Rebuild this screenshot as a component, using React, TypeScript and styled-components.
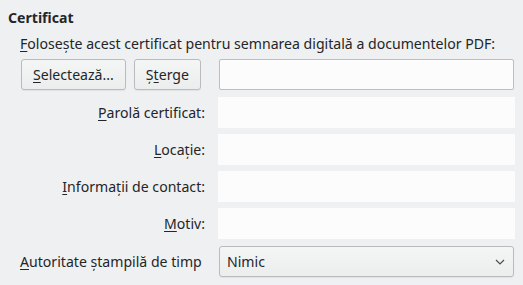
import styled, { createGlobalStyle } from 'styled-components';

const GlobalStyle = createGlobalStyle`
  html, body {
    margin: 0;
    padding: 0;
    background: #eff0f1;
  }
  body {
    font-family: 'Noto Sans', 'DejaVu Sans', sans-serif;
    font-size: 14.1px;
    color: #232629;
  }
`;

const Page = styled.div`
  width: 523px;
  height: 285px;
  box-sizing: border-box;
  padding: 8px 0 0 8px;
`;

const Title = styled.div`
  font-weight: bold;
  line-height: 19px;
`;

const Body = styled.div`
  padding: 0 8px 0 12px;
  margin-top: 7px;
`;

const Intro = styled.div`
  line-height: 19px;
  margin-bottom: 6px;
`;

const Form = styled.div`
  display: grid;
  grid-template-columns: 185px 297px;
  column-gap: 13px;
  row-gap: 6px;
  align-items: center;
`;

const ButtonPair = styled.div`
  display: flex;
  gap: 8px;
  padding-left: 1px;
  margin-bottom: 1px;
`;

const Button = styled.button`
  height: 31px;
  padding: 0 11px;
  border: 1px solid #b9bbbd;
  border-radius: 3px;
  background: linear-gradient(#f4f5f5, #eceded);
  font: inherit;
  color: #232629;
  box-shadow: 0 1px 1px rgba(0, 0, 0, 0.06);
`;

const Label = styled.div<{ $align?: 'left' | 'right' }>`
  text-align: ${({ $align }) => $align ?? 'right'};
  white-space: nowrap;
`;

const Mn = styled.span`
  text-decoration: underline;
  text-decoration-thickness: 1px;
  text-underline-offset: 2px;
`;

const Field = styled.div<{ $framed?: boolean }>`
  height: ${({ $framed }) => ($framed ? '29px' : '31px')};
  margin: ${({ $framed }) => ($framed ? '0 1px 1px' : '0')};
  background: #fcfcfc;
  border: ${({ $framed }) => ($framed ? '1px solid #bcbebf' : 'none')};
  border-radius: ${({ $framed }) => ($framed ? '2px' : '0')};
`;

const Combo = styled.div`
  height: 29px;
  margin: 1px 1px 0;
  display: flex;
  align-items: center;
  justify-content: space-between;
  padding: 0 8px 0 7px;
  border: 1px solid #b9bbbd;
  border-radius: 3px;
  background: linear-gradient(#f4f5f5, #eceded);
  box-shadow: 0 1px 1px rgba(0, 0, 0, 0.06);
`;

const Chevron = () => (
  <svg width="10" height="6" viewBox="0 0 10 6">
    <path d="M1 1 L5 5 L9 1" fill="none" stroke="#4d4d4d" strokeWidth="1.2" />
  </svg>
);

const rows: { first: string; rest: string }[] = [
  { first: 'P', rest: 'arolă certificat:' },
  { first: 'L', rest: 'ocație:' },
  { first: 'I', rest: 'nformații de contact:' },
  { first: 'M', rest: 'otiv:' },
];

export default function App() {
  return (
    <Page>
      <GlobalStyle />
      <Title>Certificat</Title>
      <Body>
        <Intro>
          <Mn>F</Mn>olosește acest certificat pentru semnarea digitală a documentelor PDF:
        </Intro>
        <Form>
          <ButtonPair>
            <Button>
              <Mn>S</Mn>electează...
            </Button>
            <Button>
              Ș<Mn>t</Mn>erge
            </Button>
          </ButtonPair>
          <Field $framed />
          {rows.map((r) => [
            <Label key={r.first + 'l'}>
              <Mn>{r.first}</Mn>
              {r.rest}
            </Label>,
            <Field key={r.first + 'f'} />,
          ])}
          <Label $align="left">
            <Mn>A</Mn>utoritate ștampilă de timp
          </Label>
          <Combo>
            <span>Nimic</span>
            <Chevron />
          </Combo>
        </Form>
      </Body>
    </Page>
  );
}
